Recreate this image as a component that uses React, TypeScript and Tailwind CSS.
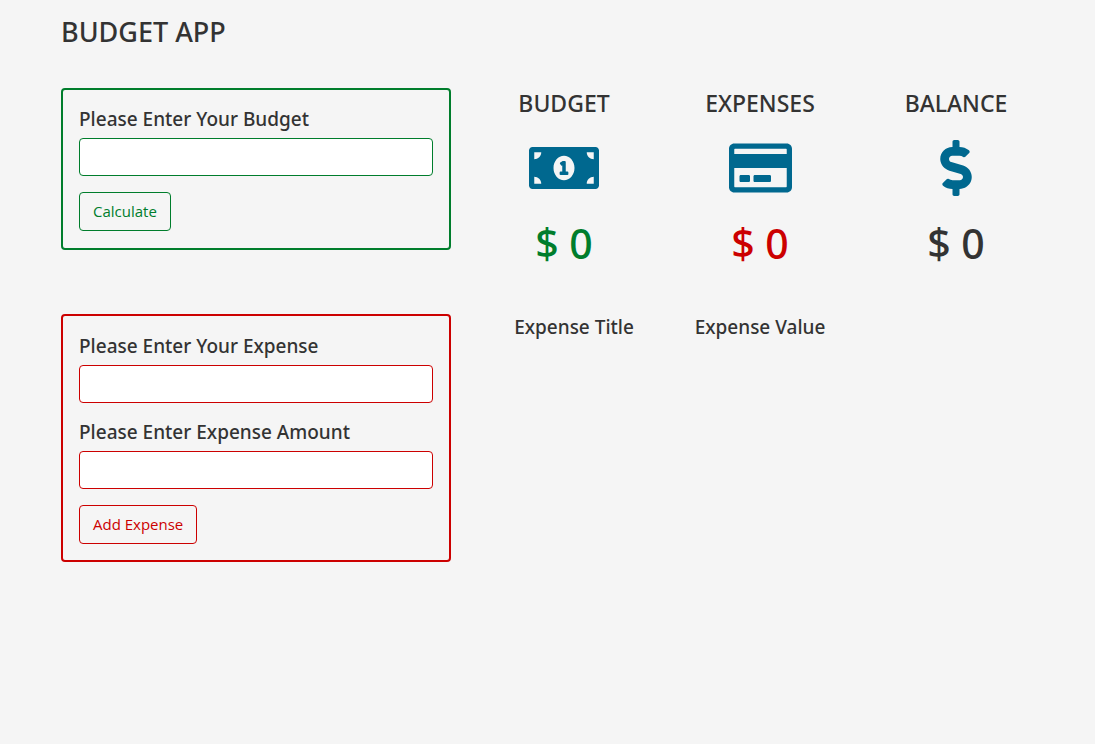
import { useState } from "react";
import type { FormEvent } from "react";
import type { IconType } from "react-icons";
import { FaMoneyBillAlt, FaRegCreditCard, FaDollarSign } from "react-icons/fa";

type Expense = { title: string; value: number };

const label = "block text-[19px] leading-[26px] font-medium";
const input = "mt-[6px] block h-[38px] w-full rounded border bg-white px-3 outline-none";
const button = "mt-4 block h-[39px] rounded border px-[13px] font-['Open_Sans',sans-serif] text-[15px]";

type StatProps = { title: string; icon: IconType; iconWidth: string; value: number; tone: string };

function Stat({ title, icon: Icon, iconWidth, value, tone }: StatProps) {
  return (
    <div className="flex flex-col items-center text-center">
      <h2 className="text-[23px] leading-[30px] font-medium">{title}</h2>
      <Icon className={"mt-[22px] h-14 text-[#00688f] " + iconWidth} aria-hidden="true" />
      <p className={"mt-6 text-[41px] leading-[46px] font-medium " + tone}>$ {value}</p>
    </div>
  );
}

export default function App() {
  const [budget, setBudget] = useState(0);
  const [expenses, setExpenses] = useState<Expense[]>([]);
  const spent = expenses.reduce((sum, e) => sum + e.value, 0);

  const submitBudget = (e: FormEvent<HTMLFormElement>) => {
    e.preventDefault();
    setBudget(Number(new FormData(e.currentTarget).get("budget")) || 0);
  };
  const submitExpense = (e: FormEvent<HTMLFormElement>) => {
    e.preventDefault();
    const data = new FormData(e.currentTarget);
    setExpenses([...expenses, { title: String(data.get("title")), value: Number(data.get("amount")) || 0 }]);
    e.currentTarget.reset();
  };

  return (
    <main className="min-h-screen bg-[#f5f5f5] pt-4 pr-[41px] pl-[46px] font-['Noto_Sans','Open_Sans',sans-serif] text-[#333333]">
      <h1 className="px-[15px] text-[27px] leading-8 font-medium">BUDGET APP</h1>

      <div className="mt-10 grid grid-cols-[5fr_7fr]">
        <div className="px-[15px]">
          <form onSubmit={submitBudget} className="rounded border-2 border-[#007d2c] p-4 pb-[17px]">
            <label htmlFor="budget" className={label}>Please Enter Your Budget</label>
            <input id="budget" name="budget" type="text" inputMode="decimal" className={input + " border-[#007d2c]"} />
            <button type="submit" className={button + " border-[#007d2c] text-[#007d2c]"}>Calculate</button>
          </form>
        </div>
        <section className="grid grid-cols-3">
          <Stat title="BUDGET" value={budget} tone="text-[#007d2c]" icon={FaMoneyBillAlt} iconWidth="w-[70px]" />
          <Stat title="EXPENSES" value={spent} tone="text-[#cc0000]" icon={FaRegCreditCard} iconWidth="w-[63px]" />
          <Stat title="BALANCE" value={budget - spent} tone="" icon={FaDollarSign} iconWidth="w-8" />
        </section>
      </div>

      <div className="mt-12 grid grid-cols-[5fr_7fr]">
        <div className="px-[15px]">
          <form onSubmit={submitExpense} className="rounded border-2 border-[#cc0000] p-4 pt-[17px]">
            <label htmlFor="title" className={label}>Please Enter Your Expense</label>
            <input id="title" name="title" type="text" className={input + " border-[#cc0000]"} />
            <label htmlFor="amount" className={label + " mt-4"}>Please Enter Expense Amount</label>
            <input id="amount" name="amount" type="text" inputMode="decimal" className={input + " border-[#cc0000]"} />
            <button type="submit" className={button + " border-[#cc0000] text-[#cc0000]"}>Add Expense</button>
          </form>
        </div>
        <div className="px-[15px]">
          <table className="w-full table-fixed text-center">
            <thead>
              <tr className="text-[19px] leading-[26px]">
                <th scope="col" className="font-medium">Expense Title</th>
                <th scope="col" className="font-medium">Expense Value</th>
                <td />
              </tr>
            </thead>
            <tbody>
              {expenses.map((e, i) => (
                <tr key={i} className="leading-10 text-[#cc0000]">
                  <td>{e.title}</td>
                  <td>{e.value}</td>
                  <td>
                    <button type="button" onClick={() => setExpenses(expenses.filter((_, n) => n !== i))}>Delete</button>
                  </td>
                </tr>
              ))}
            </tbody>
          </table>
        </div>
      </div>
    </main>
  );
}
